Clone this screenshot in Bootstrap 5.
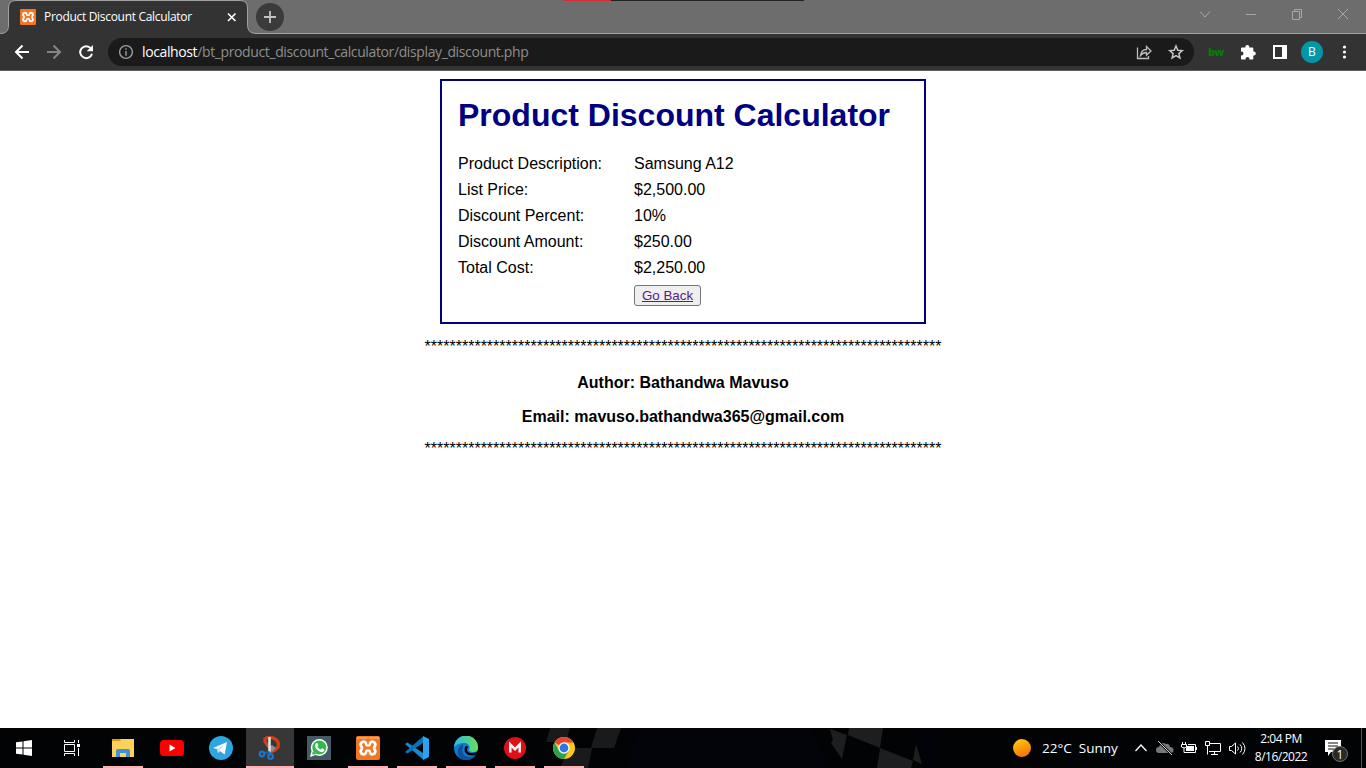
<!DOCTYPE html>
<html lang="en">
<head>
<meta charset="utf-8">
<meta name="viewport" content="width=device-width, initial-scale=1">
<title>Product Discount Calculator</title>
<link href="https://cdn.jsdelivr.net/npm/bootstrap@5.3.0/dist/css/bootstrap.min.css" rel="stylesheet">
<style>
body{font-family:"Liberation Sans",Arial,sans-serif;color:#000;background:#fff;font-size:16px;line-height:18px}
svg{display:block;flex:none}
.ui{font-family:"Open Sans","Noto Sans",sans-serif}
.strip{height:34px;background:#6d6d6d;border-bottom:1px solid #a1a1a1}
.tab-shape{left:0;top:0}
.tab-item{width:247px;height:34px;padding-left:20px;padding-right:5px;color:#fff;font-size:12px}
.tab-title{margin-left:8px;letter-spacing:-.31px;width:178px;white-space:nowrap}
.newtab{width:28px;height:28px;margin:3px 0 0 9px;background:#3b3b3b}
.wincontrols{padding-right:15px;margin-top:-5px}
.wincontrols svg{margin-left:30px}
.load-bar{left:563px;top:0;width:241px;height:1px;background:#222}
.load-bar div{width:48px;height:1px;background:#d82c35}
.toolbar-row{height:37px;background:#333;border-bottom:1px solid #606060;padding-left:14px;padding-bottom:1px}
.omni{height:28px;width:1086px;border-radius:14px;background:#1a1a1a;margin-left:14px;padding:0 10px;color:#8e8e8e;font-size:14px}
.omni b{font-weight:400;color:#fff}
.url{margin-left:8px;letter-spacing:-.38px;white-space:nowrap}
.ext{font-family:"Open Sans",sans-serif;font-weight:800;font-size:11px;color:#067a06;letter-spacing:-.7px;width:16px;margin-left:14px}
.avatar{width:22px;height:22px;background:#0097a7;color:#fff;font-size:12px;margin-left:13px}
.content{padding-top:8px}
.panel{width:486px;height:245px;border:2px solid navy;padding:16px 16px 0}
.panel h1{font-size:32px;font-weight:700;color:navy;line-height:37px;margin:0 0 17px;white-space:nowrap}
.line{height:26px}
.line dt{width:176px;font-weight:400}
.line dd{margin:0}
.back{width:67px;height:21px;border:1px solid #767676;border-radius:3px;background:#efefef;font-size:13.33px;line-height:18px;color:#551a8b;padding:0;margin-left:176px;margin-top:4px}
.stars{white-space:nowrap;line-height:18px;margin-top:14px}
.credit{font-weight:700;margin:16px 0 0}
.stars + .credit{margin-top:18px}
.taskbar{height:40px;background:#020305;color:#fff}
.scenery{left:540px;top:0}
.task{width:48px;height:40px}
.apps{margin-left:3px;gap:1px}
.run::after{content:"";position:absolute;left:4px;right:4px;bottom:0;height:2px;background:#ffb0b5}
.current{background:#373737}
.current::after{left:0;right:0}
.weather{font-size:13.5px;white-space:nowrap}
.clock{font-size:12px;line-height:18px;width:64px;white-space:nowrap;letter-spacing:-.5px}
</style>
</head>
<body class="d-flex flex-column vh-100 overflow-hidden">
<header class="ui">
  <div class="strip position-relative d-flex justify-content-between">
    <svg class="tab-shape position-absolute" width="256" height="34"><path d="M0 33.500C6 33.500 8.500 31 8.500 25V8Q8.500.5 16 .5H240Q247.500.5 247.500 8V25Q247.500 33.500 256 33.500V34H0Z" fill="#333"/><path d="M0 33.500C6 33.500 8.500 31 8.500 25V8Q8.500.5 16 .5H240Q247.500.5 247.500 8V25Q247.500 33.500 256 33.500" fill="none" stroke="#a1a1a1"/></svg>
    <div class="load-bar position-absolute"><div></div></div>
    <div class="d-flex position-relative">
      <div class="tab-item d-flex align-items-center">
        <svg width="16" height="16" viewBox="0 0 24 24"><rect width="24" height="24" rx="2" fill="#f37623"/><use href="#xa"/></svg>
        <span class="tab-title">Product Discount Calculator</span>
        <svg width="20" height="20"><path d="m6 6.500 7.500 7.500m0-7.500L6 14" stroke="#fff" stroke-width="1.600"/></svg>
      </div>
      <div class="newtab rounded-circle d-flex align-items-center justify-content-center"><svg width="14" height="14"><path d="M7 1v12M1 7h12" stroke="#c2c2c2" stroke-width="1.800"/></svg></div>
    </div>
    <div class="wincontrols d-flex align-items-center">
      <svg width="16" height="16" fill="none" stroke="#a7a7a7"><path d="m3 5.500 5 5.500 5-5.500"/></svg>
      <svg width="16" height="16"><path d="M3 8.500h10" stroke="#a7a7a7"/></svg>
      <svg width="16" height="16" fill="none" stroke="#a7a7a7"><path d="M3.500 5.500h7v8h-7zM5.500 5.500v-2h7v8h-2"/></svg>
      <svg width="16" height="16"><path d="m3 3 10 10M13 3 3 13" stroke="#a7a7a7"/></svg>
    </div>
  </div>
  <div class="toolbar-row d-flex align-items-center">
    <svg width="16" height="16" fill="none" stroke="#fff" stroke-width="2"><path d="M15 8H2M8.500 1.500 2 8l6.500 6.500"/></svg>
    <svg class="ms-3" width="16" height="16" fill="none" stroke="#858585" stroke-width="2"><path d="M1 8h13M7.500 1.500 14 8l-6.500 6.500"/></svg>
    <svg class="ms-3" width="16" height="16"><path d="M12.900 4.400A6 6 0 1 0 14 9.700" fill="none" stroke="#fff" stroke-width="2"/><path d="M15 1v6.300H8.700z" fill="#fff"/></svg>
    <div class="omni d-flex align-items-center">
      <svg width="16" height="16" fill="none" stroke="#9aa0a6" stroke-width="1.400"><circle cx="8" cy="8" r="6.400"/><path d="M8 7v4.700M8 4.200v1.600"/></svg>
      <span class="url me-auto"><b>localhost</b>/bt_product_discount_calculator/display_discount.php</span>
      <svg width="16" height="16" fill="none" stroke="#bdbdbd" stroke-width="1.300"><path d="M1.500 3.500v11h11V12M4.500 11.500c.5-4 2.500-6 6-6V2.500L15 7l-4.500 4.300V8.500c-3 0-4.500 1-6 3z"/></svg>
      <svg class="ms-3" width="16" height="16" fill="none" stroke="#c6c6c6" stroke-width="1.500"><path d="m8 2 1.800 4.200 4.500.4-3.400 3 1 4.400L8 11.700 4.100 14l1-4.400-3.400-3 4.500-.4z"/></svg>
    </div>
    <span class="ext">bw</span>
    <svg style="margin-left:16px" width="16" height="16" fill="#fff"><path d="M1 4.500Q1 3.500 2 3.500h3.300V3a2 2 0 0 1 4 0v.5h3q1 0 1 1v3h.5a2 2 0 0 1 0 4h-.5v3q0 1-1 1H9.500v-.5a2 2 0 0 0-4 0v.500H2q-1 0-1-1v-3h.5a2 2 0 0 0 0-4H1z"/></svg>
    <svg class="ms-3" width="16" height="16"><path fill="#fff" fill-rule="evenodd" d="M1 1h14v14H1zM3 3v10h7V3z"/></svg>
    <span class="avatar rounded-circle d-flex align-items-center justify-content-center">B</span>
    <svg style="margin-left:14px" width="16" height="16" fill="#fff"><circle cx="7.500" cy="3" r="1.600"/><circle cx="7.500" cy="8" r="1.600"/><circle cx="7.500" cy="13" r="1.600"/></svg>
  </div>
</header>

<main class="content flex-grow-1 d-flex flex-column align-items-center">
  <section class="panel">
    <h1>Product Discount Calculator</h1>
    <dl class="m-0">
      <div class="line d-flex align-items-center"><dt>Product Description:</dt><dd>Samsung A12</dd></div>
      <div class="line d-flex align-items-center"><dt>List Price:</dt><dd>$2,500.00</dd></div>
      <div class="line d-flex align-items-center"><dt>Discount Percent:</dt><dd>10%</dd></div>
      <div class="line d-flex align-items-center"><dt>Discount Amount:</dt><dd>$250.00</dd></div>
      <div class="line d-flex align-items-center"><dt>Total Cost:</dt><dd>$2,250.00</dd></div>
    </dl>
    <button class="back d-block text-decoration-underline">Go Back</button>
  </section>
  <div class="stars">***********************************************************************************</div>
  <p class="credit">Author: Bathandwa Mavuso</p>
  <p class="credit">Email: mavuso.bathandwa365@gmail.com</p>
  <div class="stars">***********************************************************************************</div>
</main>

<footer class="taskbar ui position-relative d-flex">
  <svg class="scenery position-absolute" width="400" height="40"><path d="M57 0h24l-7 20H51zM29 20h23l-4 20H20zM10 0h20l-4 14H6z" fill="#191a1c"/><path d="M100 0h170q12 20 18 40H86q5-20 14-40" fill="#03040a"/><path d="m290 1 17 6-5 24-11-16 2-3zM309 0h34l-3 20-32-13zM340 20l33 13-2 7h-34zM376 16l6 20-9-4z" fill="#1d1e20"/><path d="M372 0h28v40h-14z" fill="#020309"/></svg>
  <div class="d-flex position-relative">
    <div class="task d-flex align-items-center justify-content-center"><svg width="16" height="16" fill="#fff"><path d="m0 2.300 6.500-.9v6H0zM7.500 1.200 16 0v7.400H7.500zM0 8.500h6.500v6.100L0 13.700zM7.500 8.500H16V16l-8.500-1.200z"/></svg></div>
    <div class="task d-flex align-items-center justify-content-center"><svg width="16" height="16" fill="none" stroke="#fff"><path d="M.5 0v2.500h10V0M.5 4.500h10v7H.500zM.5 16v-2.500h10V16M14.500 0v3M14.500 8v8"/><path fill="#fff" stroke="none" d="M13 4h3v3h-3z"/></svg></div>
  </div>
  <div class="apps d-flex position-relative">
    <div class="task run position-relative d-flex align-items-center justify-content-center"><svg width="24" height="24"><path d="M1 3h22v18H1z" fill="#ffd15b"/><path d="M1 3h9l-1 2H1z" fill="#e39b0b"/><path d="M11 2h12v1H11z" fill="#020305"/><path d="M5 21v-6q0-2 2-2h10q2 0 2 2v6h-4v-4H9v4z" fill="#3d93d3"/></svg></div>
    <div class="task d-flex align-items-center justify-content-center"><svg width="24" height="24"><rect y="4" width="24" height="16" rx="4" fill="#f00"/><path d="m9.500 8.500 6 3.500-6 3.500z" fill="#fff"/></svg></div>
    <div class="task d-flex align-items-center justify-content-center"><svg width="24" height="24"><circle cx="12" cy="12" r="12" fill="#2ca5e0"/><path d="m4 12 14-6-2.400 12.500-4.600-3.500-2 2-.700-3.900z" fill="#fff"/><path d="M8.500 13 15 9l-4.500 5.500L9 17z" fill="#c4dfef"/></svg></div>
    <div class="task run current position-relative d-flex align-items-center justify-content-center"><svg width="24" height="24"><path d="M6 4Q10 0 15 2q7 3 5 9-3 4-6 4L6 4" fill="none" stroke="#cf3f14" stroke-width="3.400"/><path d="m6 6 5 5 3-2 4 3-4 4" fill="#8b8f92"/><path d="M11.500 1v16" stroke="#e0e3e5" stroke-width="2.600"/><path d="m6 17 5-1 2 3" stroke="#1769b1" stroke-width="2" fill="none"/><g fill="none" stroke="#1976c8" stroke-width="2.200"><circle cx="4" cy="18" r="2.300"/><circle cx="12.500" cy="20.500" r="2.300"/></g></svg></div>
    <div class="task d-flex align-items-center justify-content-center"><svg width="24" height="24"><path fill="#455a64" d="M0 0h24v24H0z"/><circle cx="12.300" cy="11.500" r="8.500" fill="#fff"/><path d="m3 21 1.500-6 4 4z" fill="#fff"/><circle cx="12.300" cy="11.500" r="7" fill="#32b94b"/><path d="m5 18.800 1-3.800 3 2.900z" fill="#32b94b"/><path d="M9 7.200q1-.8 1.700.4l.7 1.800-1 1.200q1.200 2.300 3.300 3l1.300-1.300 2.400 1.200c.2 2-1.800 3-3.500 2.500Q9 14.500 8 10q0-1.700 1-2.800" fill="#fff"/></svg></div>
    <div class="task run position-relative d-flex align-items-center justify-content-center"><svg width="24" height="24"><rect width="24" height="24" rx="2" fill="#f37623"/><path d="M1 1h22v2H1z" fill="#f9a05e"/><g id="xa" fill="none" stroke-linecap="round" stroke-linejoin="round"><path d="M7.500 8.500 9 12l-1.500 3.500M16.500 8.500 15 12l1.500 3.500M9 12h6" stroke="#fff" stroke-width="8.400"/><path d="M7.500 8.500 9 12l-1.500 3.500M16.500 8.500 15 12l1.500 3.500M9 12h6" stroke="#f37623" stroke-width="2.800"/><path d="M12 2v6M12 16v6" stroke="#f37623" stroke-width="1.300"/></g></svg></div>
    <div class="task run position-relative d-flex align-items-center justify-content-center"><svg width="24" height="24"><path d="m0 8 2.500-1.500L18 17v6.500z" fill="#168bd3"/><path d="m0 16 2.500 1.500L18 7V.5z" fill="#0873b9"/><path d="m18 0 6 3v18l-6 3z" fill="#2ba4ed"/></svg></div>
    <div class="task run position-relative d-flex align-items-center justify-content-center"><svg width="24" height="24"><defs><linearGradient id="e1"><stop stop-color="#2db9ec"/><stop offset="1" stop-color="#67dc57"/></linearGradient></defs><circle cx="12" cy="12" r="12" fill="#1479cf"/><path d="M0 11A12 12 0 0 1 24 12c0 5-8 5-9 2 2-4-1-7-5-7Q4 7 0 11" fill="url(#e1)"/><path d="M9 11c-3 6 3 12 11.500 9.500C16 26 7 25 4 19 3 13 5 10 9 8z" fill="#0c529b"/><path d="M14 11c-3 4 1 8 9 5l1-1v3l-2 1C14 21 9 17 11 11q2-2 3 0" fill="#020305"/></svg></div>
    <div class="task run position-relative d-flex align-items-center justify-content-center"><svg width="24" height="24"><circle cx="12" cy="12" r="11" fill="#df1018"/><path d="M7.300 16.500v-8l4.700 4.700 4.700-4.700v8" fill="none" stroke="#fff" stroke-width="2.400"/></svg></div>
    <div class="task run position-relative d-flex align-items-center justify-content-center"><svg width="24" height="24"><circle cx="12" cy="12" r="11" fill="#fbc918"/><path d="M12 12 2.500 6.500A11 11 0 0 1 21.500 6.500H12z" fill="#e84435"/><path d="M2.500 6.500A11 11 0 0 0 12 23l4.800-8.300-9.600 0z" fill="#2da04e"/><circle cx="12" cy="12" r="5.700" fill="#fff"/><circle cx="12" cy="12" r="4.400" fill="#2878e8"/></svg></div>
  </div>
  <div class="ms-auto d-flex position-relative align-items-center">
    <svg width="18" height="18"><defs><linearGradient id="sun" x2=".4" y2="1"><stop stop-color="#ffcf0c"/><stop offset="1" stop-color="#f3780c"/></linearGradient></defs><circle cx="9" cy="9" r="9" fill="url(#sun)"/></svg>
    <span class="weather" style="width:92px;margin-left:11px">22°C&nbsp; Sunny</span>
    <svg width="14" height="16"><path d="m1.500 11 5.500-6 5.500 6" fill="none" stroke="#fff" stroke-width="1.300"/></svg>
    <svg style="margin-left:8px" width="18" height="16"><path d="M3 13a3 3 0 0 1 0-6q2-6 7-3 3-1 4 3a3 3 0 0 1 1 6z" fill="#777"/><path d="m2 1 14 14" stroke="#020305" stroke-width="2.400"/><path d="m2 1 14 14" stroke="#ddd"/></svg>
    <svg style="margin-left:6px" width="18" height="16" fill="none" stroke="#fff"><path d="M2.500 2v2M5.500 2v2M1.500 4.500h5V7q-2.500 2-5 0zM4 8v4.500h11.500v-8H8"/><path d="M7 6h7v5H6V8z" fill="#fff" stroke="none"/><path d="M16.500 7v3"/></svg>
    <svg style="margin-left:6px" width="18" height="16" fill="none" stroke="#fff"><path d="M6 3.500h10.500v8H5M10.500 11.500v3M7 14.500h7M1.500 1.500h4v4h-4zM3.500 5.500v9"/></svg>
    <svg style="margin-left:6px" width="18" height="16" fill="none" stroke="#fff"><path d="M1.500 6.500h2L7.500 3v11l-4-3.500h-2zM9.500 6.500q2 2 0 4M12 4.500q3.500 4 0 8M14.500 2.500q5 6 0 12"/></svg>
    <div class="clock text-center" style="margin-left:3px">2:04 PM<br>8/16/2022</div>
    <svg style="margin-left:10px" width="27" height="28"><path d="M2 6h16v12H8l-3 4v-4H2z" fill="#fff"/><path d="M5 9h10M5 12h10M5 15h6" stroke="#111"/><circle cx="17" cy="20" r="7.500" fill="#292929" stroke="#707070"/><text x="17" y="24.500" text-anchor="middle" font-size="12" fill="#fff">1</text></svg>
    <span style="width:1px;height:40px;background:#545454;margin-left:11px;margin-right:4px"></span>
  </div>
</footer>
<script src="https://cdn.jsdelivr.net/npm/bootstrap@5.3.0/dist/js/bootstrap.bundle.min.js"></script>
</body>
</html>
